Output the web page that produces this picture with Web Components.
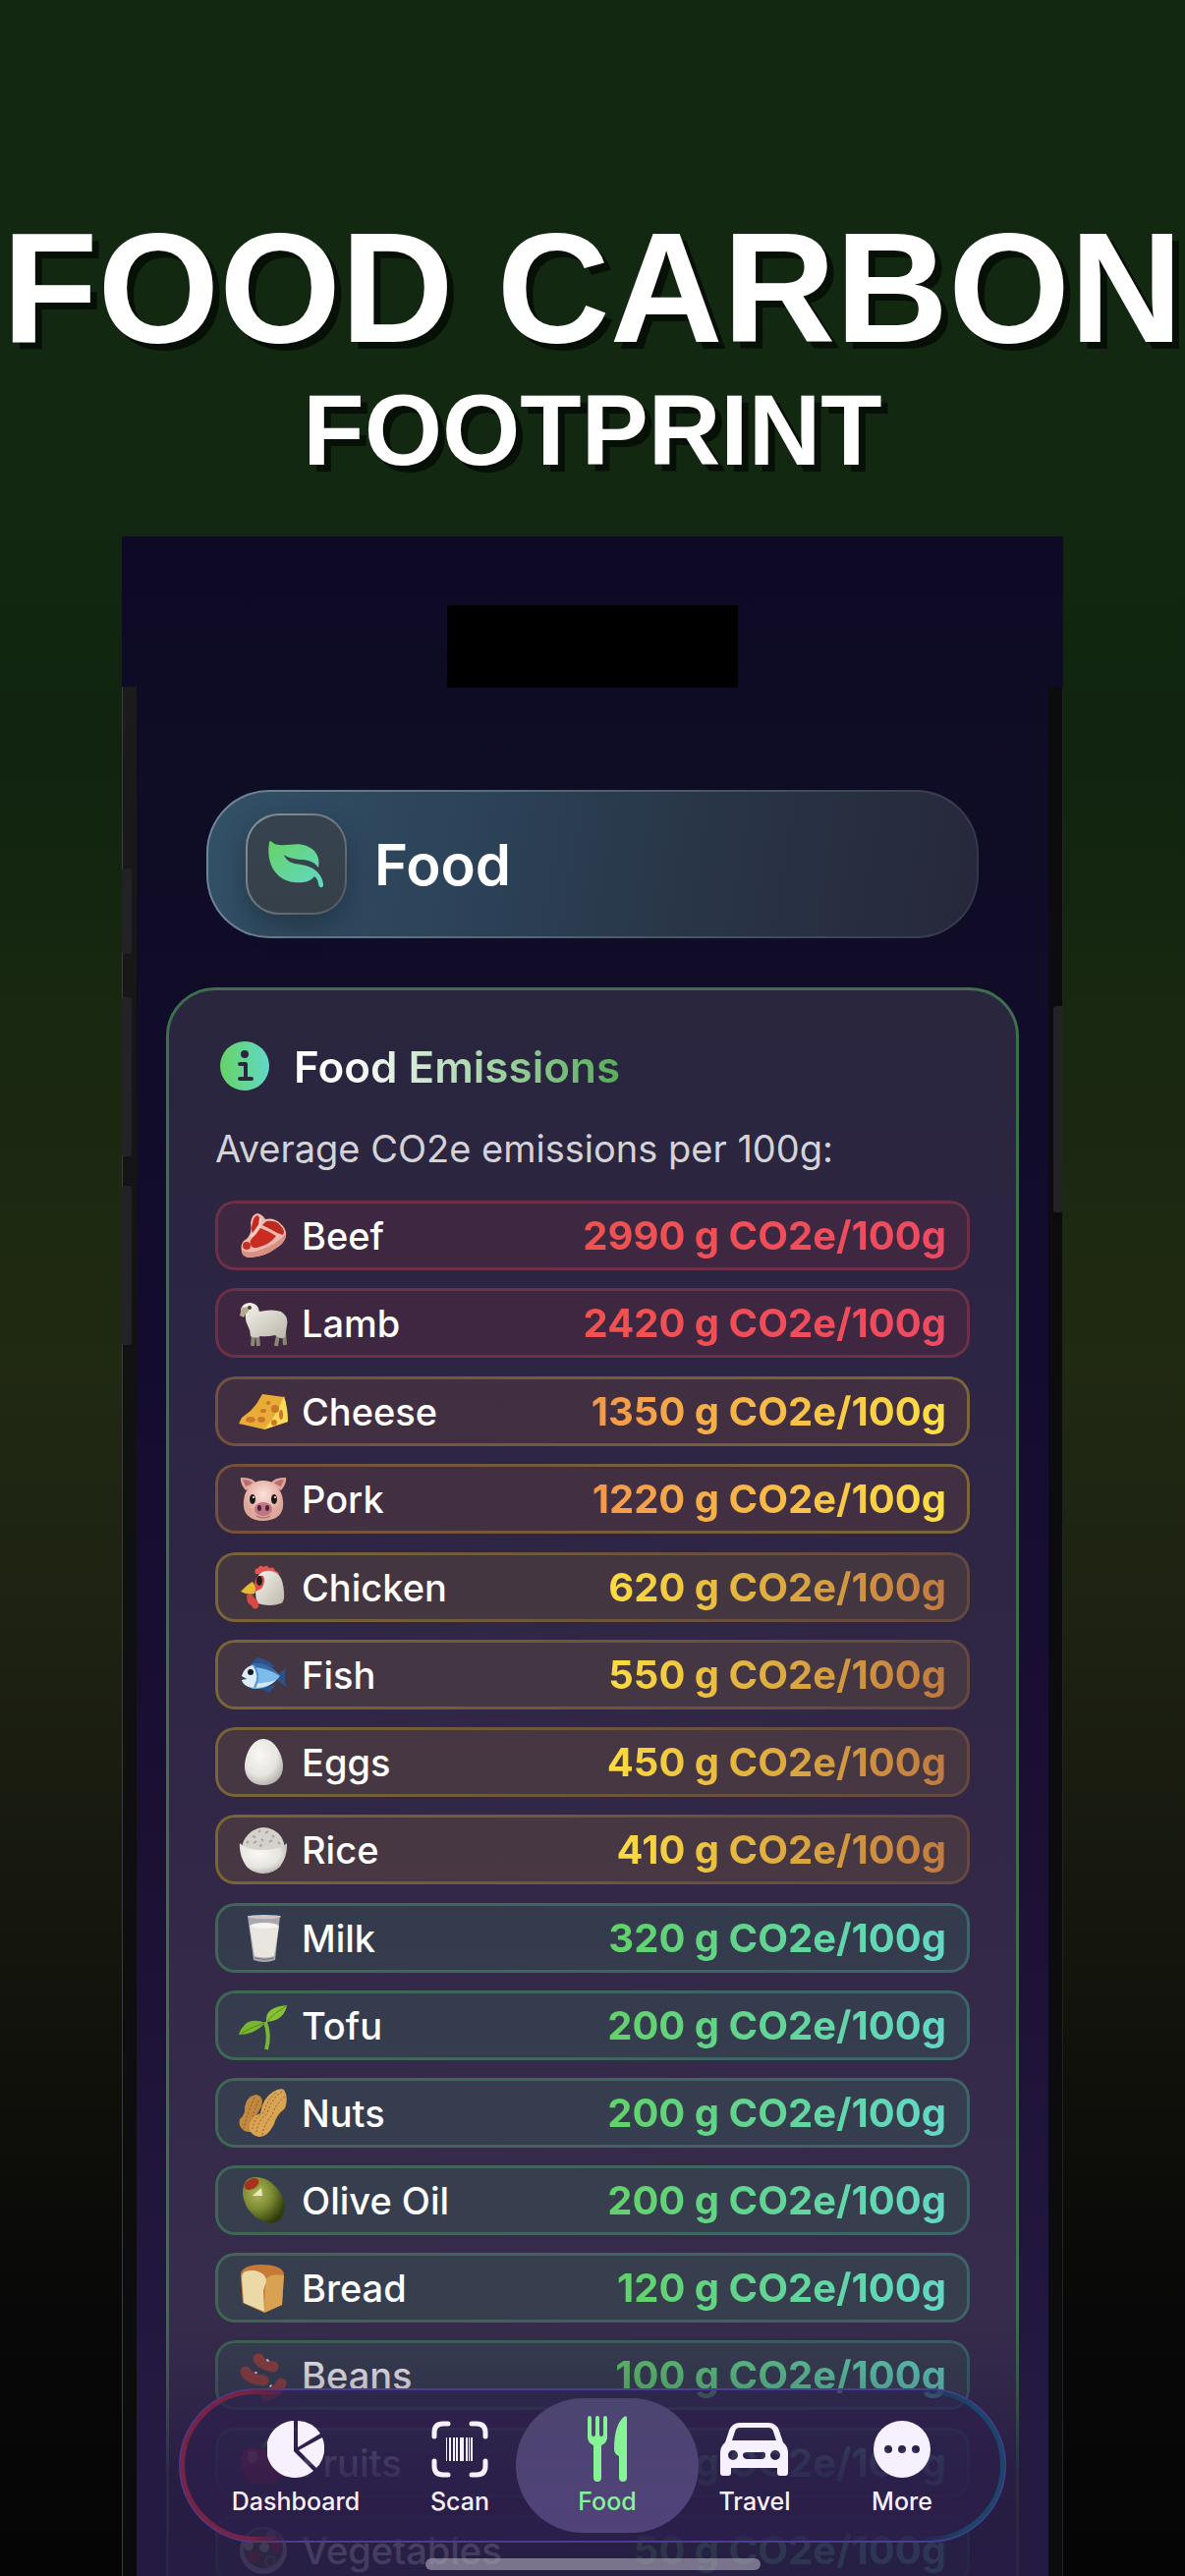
<!DOCTYPE html>
<html lang="en">
<head>
<meta charset="UTF-8">
<meta name="viewport" content="width=device-width, initial-scale=1.0">
<title>Food Carbon Footprint</title>
<style>
    html, body {
        margin: 0;
        height: 100%;
        overflow: hidden;
        background: #050505;
    }

    body {
        font-family: Inter, "Noto Sans", sans-serif;
        color: #fff;
    }
</style>
</head>
<body>
<promo-page>
    <promo-title slot="title">
        FOOD CARBON
        <span slot="sub">FOOTPRINT</span>
    </promo-title>
    <phone-frame>
        <screen-header>Food</screen-header>
        <emissions-panel>
            <span slot="title">Food Emissions</span>
            <span slot="intro">Average CO2e emissions per 100g:</span>
            <emission-tier level="red">
                <emission-row icon="beef">Beef<span slot="value">2990 g CO2e/100g</span></emission-row>
                <emission-row icon="lamb">Lamb<span slot="value">2420 g CO2e/100g</span></emission-row>
            </emission-tier>
            <emission-tier level="orange">
                <emission-row icon="cheese">Cheese<span slot="value">1350 g CO2e/100g</span></emission-row>
                <emission-row icon="pork">Pork<span slot="value">1220 g CO2e/100g</span></emission-row>
            </emission-tier>
            <emission-tier level="yellow">
                <emission-row icon="chicken">Chicken<span slot="value">620 g CO2e/100g</span></emission-row>
                <emission-row icon="fish">Fish<span slot="value">550 g CO2e/100g</span></emission-row>
                <emission-row icon="eggs">Eggs<span slot="value">450 g CO2e/100g</span></emission-row>
                <emission-row icon="rice">Rice<span slot="value">410 g CO2e/100g</span></emission-row>
            </emission-tier>
            <emission-tier level="green">
                <emission-row icon="milk">Milk<span slot="value">320 g CO2e/100g</span></emission-row>
                <emission-row icon="tofu">Tofu<span slot="value">200 g CO2e/100g</span></emission-row>
                <emission-row icon="nuts">Nuts<span slot="value">200 g CO2e/100g</span></emission-row>
                <emission-row icon="olive">Olive Oil<span slot="value">200 g CO2e/100g</span></emission-row>
                <emission-row icon="bread">Bread<span slot="value">120 g CO2e/100g</span></emission-row>
                <emission-row icon="beans">Beans<span slot="value">100 g CO2e/100g</span></emission-row>
                <emission-row icon="fruits">Fruits<span slot="value">80 g CO2e/100g</span></emission-row>
                <emission-row icon="vegetables">Vegetables<span slot="value">50 g CO2e/100g</span></emission-row>
            </emission-tier>
        </emissions-panel>
        <tab-bar slot="tabs">
            <tab-item class="wide" icon="dashboard">Dashboard</tab-item>
            <tab-item icon="scan">Scan</tab-item>
            <tab-item icon="food" active>Food</tab-item>
            <tab-item icon="travel">Travel</tab-item>
            <tab-item icon="more">More</tab-item>
        </tab-bar>
    </phone-frame>
</promo-page>

<script>
// 50x50 food pictures used by the rows
const FOOD_ICONS = {
    beef: `
        <path d="M12 12Q13 3 19 2Q24 3 27 8Q36 6 42 12Q49 18 48 25Q46 34 36 38Q30 45 12 47Q4 47 3 41Q1 31 8 28Q14 22 12 12Z" fill="#f0b9ae"/>
        <path d="M3 39Q10 44 22 39Q38 34 48 23Q49 31 36 39Q28 45 12 47Q3 47 3 39Z" fill="#d98f83"/>
        <path d="M14 12Q15 5 19 4Q23 7 21 12L14 22Q12 18 14 12Z" fill="#c62a1f"/>
        <path d="M28 10Q38 9 42 14Q48 20 45 24Q38 22 32 18L24 14Z" fill="#bd2a20"/>
        <path d="M22 17Q30 20 38 25Q32 33 22 36Q14 39 12 34Q10 29 17 24Z" fill="#c92c20"/>
        <ellipse cx="8" cy="35" rx="4" ry="4" fill="#c23125"/>
        <path d="M22 7L21 15L13 26" fill="none" stroke="#f6d5cc" stroke-width="2"/>`,
    lamb: `<g transform="translate(0 2)">
        <path d="M15 33L14 46M19 35L20 46M40 35L38 46M46 32L47 45" stroke="#8a8774" stroke-width="4"/>
        <path d="M2 10Q3 2 12 2Q20 3 21 11Q34 8 43 11Q51 16 49 25Q48 32 47 37Q42 40 37 35Q29 37 22 36Q17 39 12 36Q12 30 9 25Q6 19 7 13Z" fill="url(#wool)"/>
        <path d="M3 7L10 6Q11 12 7 13L5 17L1 15Z" fill="#b5ab8c"/>
        <circle cx="11" cy="7" r="2" fill="#48443c"/></g>`,
    cheese: `<g transform="translate(0 5)">
        <path d="M24 2L46 5Q49 17 50 30L26 38L0 32L3 26L12 19L18 12Z" fill="#e9ad37"/>
        <path d="M46 4Q50 16 50 30L26 38Q38 25 46 4Z" fill="#fada58"/>
        <g fill="#c9772b"><ellipse cx="12" cy="28" rx="5" ry="3"/><ellipse cx="23" cy="28" rx="4" ry="3"/><ellipse cx="25" cy="19" rx="3" ry="2"/><ellipse cx="37" cy="17" rx="4" ry="4"/><ellipse cx="43" cy="23" rx="2" ry="5"/><ellipse cx="36" cy="31" rx="3" ry="3"/><circle cx="30" cy="11" r="2"/></g></g>`,
    pork: `<g transform="translate(0 1)">
        <path d="M7 15Q1 8 2 2Q13 1 18 8ZM43 15Q49 8 48 2Q37 1 32 8Z" fill="#dfa59c"/>
        <path d="M7 11L4 4Q11 4 14 8ZM43 11L46 4Q39 4 36 8Z" fill="#b76f6c"/>
        <path d="M25 5Q39 5 44 20Q50 45 25 46Q0 45 6 20Q11 5 25 5Z" fill="url(#pig)"/>
        <ellipse cx="14" cy="24" rx="3" ry="5" fill="#1e1a1b"/><ellipse cx="36" cy="24" rx="3" ry="5" fill="#1e1a1b"/>
        <circle cx="15" cy="22" r="1" fill="#fff"/><circle cx="37" cy="22" r="1" fill="#fff"/>
        <ellipse cx="25" cy="34" rx="9" ry="7" fill="#bd7588"/>
        <ellipse cx="21" cy="33" rx="2" ry="3" fill="#4e2030"/><ellipse cx="29" cy="33" rx="2" ry="3" fill="#4e2030"/>
        <path d="M18 41Q25 45 32 41" stroke="#9a635f" stroke-width="1" fill="none"/></g>`,
    chicken: `<g transform="translate(0 1)">
        <path d="M17 10Q15 4 20 4Q21 0 25 3Q29 0 31 4Q36 2 37 7Q43 8 40 14Z" fill="#e2564f"/>
        <path d="M19 13Q25 4 36 8Q45 11 46 29Q47 38 43 40Q32 44 19 40Q15 28 19 13Z" fill="url(#wool)"/>
        <path d="M16 20Q17 10 25 12Q28 18 23 25L17 28Z" fill="#d94c49"/>
        <ellipse cx="21" cy="17" rx="3" ry="5" fill="#211c1c"/>
        <path d="M2 28Q8 21 14 18Q19 24 16 30Q9 32 2 28Z" fill="#e8b830"/>
        <path d="M8 32Q13 28 16 35Q21 37 20 44Q15 48 13 42Q8 41 8 32Z" fill="#d64945"/></g>`,
    fish: `<g transform="translate(0 4)">
        <path d="M12 11Q14 5 20 3Q33 7 37 13ZM40 20L48 13Q46 22 48 33L39 26ZM20 34L31 39L38 31Z" fill="#2c5089"/>
        <path d="M3 22Q9 10 22 10Q33 11 42 22Q32 35 16 35Q5 33 3 26L8 25Z" fill="#7dbcea"/>
        <path d="M12 10Q27 5 42 22Q29 13 12 13Z" fill="#3569a8"/>
        <path d="M3 22Q6 12 15 11Q23 21 16 34Q5 33 3 26L9 25Z" fill="#dcecf8"/>
        <path d="M16 34Q30 34 38 26Q28 30 18 29Z" fill="#d5e8f5"/>
        <path d="M15 11Q23 21 16 34" fill="none" stroke="#5996ce" stroke-width="2"/>
        <circle cx="12" cy="18" r="3" fill="#171923"/></g>`,
    eggs: `<path d="M25 1C37 1 45 18 45 29C45 41 36 48 25 48C14 48 6 41 6 29C6 18 13 1 25 1Z" fill="url(#egg)"/>`,
    rice: `<g transform="translate(0 1)">
        <path d="M3 21Q5 10 15 4Q25 -2 36 4Q45 9 47 21L25 27Z" fill="#d5d1cc"/>
        <path d="M8 17L10 15M14 10L17 11M20 6L22 4M27 7L30 5M34 9L36 11M15 17L18 15M23 13L25 15M31 16L34 14M40 16L42 18M21 20L24 19" stroke="#a8a39d" stroke-width="2"/>
        <path d="M1 17Q8 24 25 24Q42 24 49 17Q50 30 42 41Q35 48 25 48Q15 48 8 41Q0 30 1 17Z" fill="url(#egg)"/></g>`,
    milk: `
        <path d="M9 2L42 2L37 47Q26 51 15 47Z" fill="#a9a8ae"/>
        <path d="M11 12Q26 17 41 12L36 43Q26 46 16 43Z" fill="#e9e6df"/>
        <ellipse cx="26" cy="12" rx="14" ry="3" fill="#f7f5ef"/>
        <ellipse cx="26" cy="3" rx="17" ry="2" fill="#c9c8cd"/>
        <path d="M16 45Q26 48 36 45" fill="none" stroke="#777" stroke-width="1"/>`,
    tofu: `<g transform="translate(0 3)">
        <path d="M28 46Q32 32 27 18" fill="none" stroke="#7cb536" stroke-width="4"/>
        <path d="M0 31Q7 11 27 19Q16 31 0 31Z" fill="#79b52f"/>
        <path d="M28 18Q26 3 49 1Q46 17 28 18Z" fill="#86c136"/>
        <path d="M2 30Q13 23 26 19M29 17Q36 9 48 2" fill="none" stroke="#538a22" stroke-width="1"/></g>`,
    nuts: `
        <path d="M18 6Q26 8 23 18Q20 24 17 28Q20 34 17 40Q13 46 6 43Q-1 39 1 31Q7 26 6 19Q8 7 18 6Z" fill="#c1883f"/>
        <path d="M46 1Q51 9 47 20Q38 27 36 36Q29 50 20 49Q9 46 11 36Q13 28 22 25Q24 10 35 3Q42-1 46 1Z" fill="#d9a453"/>
        <g fill="none" stroke="#8e5a26" stroke-width="1" stroke-dasharray="2 2"><path d="M44 3Q33 10 29 25Q18 34 18 46M47 8Q37 16 34 27Q26 35 24 47M38 4Q28 12 26 24Q15 30 14 41M16 9L10 23L5 40M20 12L14 28"/></g>`,
    olive: `
        <path d="M9 3Q19-2 31 5Q46 16 47 31Q46 47 33 48Q20 47 9 33Q-1 15 9 3Z" fill="url(#olive)"/>
        <ellipse cx="14" cy="8" rx="9" ry="6" transform="rotate(-24 14 8)" fill="#8c9a3c"/>
        <ellipse cx="13" cy="8" rx="8" ry="5" transform="rotate(-30 13 8)" fill="#a8301c"/>
        <path d="M14 20L23 12L24 20Z" fill="#e9edb4"/>`,
    bread: `
        <path d="M2 13Q1 2 22 1Q43 1 46 10L44 42L26 50L4 40Z" fill="#c57a38"/>
        <path d="M27 18Q29 9 46 12L44 42L26 50Z" fill="#d8a250"/>
        <path d="M3 14Q3 6 15 7Q28 9 28 18L25 27L26 49L5 40Z" fill="#ecd9a8"/>`,
    beans: `
        <g stroke-linecap="round" stroke-width="11" fill="none" stroke="#91423c"><path d="M20 8Q23 14 35 16"/><path d="M7 21Q11 29 25 30"/><path d="M28 46Q39 43 43 33"/></g>
        <g stroke-linecap="round" stroke-width="2" stroke="#e4cccb"><path d="M29 9L30 10M17 22L18 22M32 36L33 35"/></g>`,
    fruits: `
        <path d="M25 13Q34 6 43 12Q51 21 46 33Q39 48 33 47L25 45L18 47Q9 47 4 33Q-1 20 7 12Q15 7 25 13Z" fill="#e3293c"/>
        <path d="M25 13Q24 5 19 2" fill="none" stroke="#70492e" stroke-width="2"/>
        <path d="M25 9Q25 0 35-1Q34 8 25 9Z" fill="#76bc33"/>
        <ellipse cx="14" cy="19" rx="5" ry="6" fill="#f28b94"/>`,
    vegetables: `
        <circle cx="25" cy="25" r="24" fill="#c8c7c5"/>
        <circle cx="25" cy="23" r="20" fill="#5b713e"/>
        <g fill="#e3e0d3"><circle cx="10" cy="20" r="5"/><circle cx="26" cy="22" r="5"/><circle cx="33" cy="9" r="5"/></g>
        <g fill="#cb4151"><circle cx="15" cy="31" r="6"/><circle cx="38" cy="21" r="6"/></g>
        <circle cx="32" cy="36" r="5" fill="none" stroke="#a685b5" stroke-width="2"/>`
};

const FOOD_DEFS = `
    <defs>
        <linearGradient id="wool" x2="1" y2="1"><stop stop-color="#f7f5ef"/><stop offset="1" stop-color="#bcb7ab"/></linearGradient>
        <radialGradient id="pig" cy=".35"><stop stop-color="#fce2da"/><stop offset="1" stop-color="#e0a69a"/></radialGradient>
        <radialGradient id="egg" cx=".4" cy=".35" r=".75"><stop stop-color="#f9f8f5"/><stop offset=".6" stop-color="#e6e4df"/><stop offset="1" stop-color="#a9a69d"/></radialGradient>
        <radialGradient id="olive" cx=".35" cy=".35" r=".7"><stop stop-color="#aeb85a"/><stop offset=".5" stop-color="#7d8a32"/><stop offset="1" stop-color="#303c0c"/></radialGradient>
    </defs>`;

const TAB_ICONS = {
    dashboard: `<svg width="58" height="58" viewBox="0 0 58 58">
        <path d="M27 0V31L47 51A29 29 0 1 1 27 0Z"/>
        <path d="M31 0A29 29 0 0 1 54 13L31 27Z"/>
        <path d="M56 17A29 29 0 0 1 50 48L32 30Z"/></svg>`,
    scan: `<svg width="58" height="58" viewBox="0 0 58 58">
        <path d="M3 16V12Q3 3 12 3H17M41 3H46Q55 3 55 12V16M55 41V46Q55 55 46 55H41M17 55H12Q3 55 3 46V41" fill="none" stroke="currentColor" stroke-width="5" stroke-linecap="round"/>
        <path d="M15 17h1v24h-1zM18 17h2v24h-2zM22 17h2v24h-2zM25 17h2v24h-2zM29 17h4v24h-4zM35 17h2v24h-2zM38 17h1v24h-1zM40 17h2v24h-2z"/></svg>`,
    food: `<svg width="41" height="68" viewBox="0 0 41 68">
        <path d="M0 22V3Q0 0 2 0T4 3V19Q4 21 6 21T8 19V2Q8 0 10 0T12 2V19Q12 21 14 21T16 19V3Q16 0 18 0T20 3V22Q20 27 14 30V63Q14 67 10 67T6 63V30Q0 27 0 22Z"/>
        <path d="M40 2V63Q40 67 36 67T32 63V41Q27 39 27 34Q27 9 37 1Q40-1 40 2Z"/></svg>`,
    travel: `<svg width="70" height="54" viewBox="0 0 70 54">
        <path fill-rule="evenodd" d="M20 0H49Q57 0 60 8L64 20Q69 24 69 31V51Q69 54 66 54H61Q58 54 58 51V46H11V51Q11 54 8 54H3Q0 54 0 51V31Q0 24 5 20L9 8Q12 0 20 0ZM20 5Q16 5 15 9L12 18H57L54 9Q53 5 49 5ZM13 28A5 5 0 1 0 13 38A5 5 0 1 0 13 28ZM56 28A5 5 0 1 0 56 38A5 5 0 1 0 56 28ZM27 30Q23 30 23 33T27 37H42Q46 37 46 33T42 30Z"/></svg>`,
    more: `<svg width="58" height="58" viewBox="0 0 58 58">
        <path fill-rule="evenodd" d="M29 0A29 29 0 1 0 29 58A29 29 0 1 0 29 0ZM15 25A4 4 0 1 1 15 33A4 4 0 1 1 15 25ZM29 25A4 4 0 1 1 29 33A4 4 0 1 1 29 25ZM43 25A4 4 0 1 1 43 33A4 4 0 1 1 43 25Z"/></svg>`
};

class PromoPage extends HTMLElement {
    connectedCallback() {
        this.attachShadow({ mode: 'open' });
        this.shadowRoot.innerHTML = `
            <style>
                :host {
                    display: flex;
                    flex-direction: column;
                    box-sizing: border-box;
                    height: 100vh;
                    overflow: hidden;
                    padding-top: 212px;
                    background: linear-gradient(#122810, #122810 20%, #10240f 29%, #192811 40%, #202912 53%, #1d2112 64%, #13140c 77%, #080808 90%, #050505);
                }
            </style>
            <slot name="title"></slot>
            <slot></slot>
        `;
    }
}

class PromoTitle extends HTMLElement {
    connectedCallback() {
        this.attachShadow({ mode: 'open' });
        this.shadowRoot.innerHTML = `
            <style>
                :host { display: block; }

                h1 {
                    display: flex;
                    flex-direction: column;
                    align-items: center;
                    gap: 12px;
                    margin: 0;
                    font: bold 159px/162px "Liberation Sans", Arial, sans-serif;
                    white-space: nowrap;
                    text-shadow: 7px 7px rgba(0, 0, 0, 0.6);
                }

                .sub {
                    font-size: 102px;
                    line-height: 104px;
                }
            </style>
            <h1>
                <span><slot></slot></span>
                <span class="sub"><slot name="sub"></slot></span>
            </h1>
        `;
    }
}

class PhoneFrame extends HTMLElement {
    connectedCallback() {
        this.attachShadow({ mode: 'open' });
        this.shadowRoot.innerHTML = `
            <style>
                :host {
                    display: flex;
                    flex-direction: column;
                    flex: 1;
                    min-height: 0;
                    position: relative;
                    margin: 56px 124px 0;
                    background: linear-gradient(#0e0a26, #0f0c25 12%, #140c2f 40%, #1c1033 65%, #231840 90%, #241a42);
                }

                .screen {
                    flex: 1;
                    min-height: 0;
                    overflow: hidden;
                    padding: 258px 15px 0;
                }

                .rail {
                    position: absolute;
                    top: 153px;
                    bottom: 0;
                    width: 14px;
                    background: linear-gradient(#1b1b1c, #111112 40%, #0b0b0d);
                }

                .left { left: 0; border-left: 1px solid #3c3c3e; }
                .right { right: 0; border-right: 1px solid #222224; background: #0c0c0e; }

                .key {
                    position: absolute;
                    width: 10px;
                    border-radius: 3px;
                    background: #232226;
                }

                .key.action { top: 338px; left: 0; height: 87px; }
                .key.up { top: 469px; left: 0; height: 162px; }
                .key.down { top: 661px; left: 0; height: 162px; }
                .key.power { top: 478px; right: 0; height: 210px; }

                .island {
                    position: absolute;
                    top: 70px;
                    left: 50%;
                    width: 296px;
                    height: 84px;
                    margin-left: -148px;
                    background: #000;
                }

                .fade {
                    position: absolute;
                    left: 15px;
                    right: 15px;
                    bottom: 0;
                    height: 270px;
                    background: linear-gradient(rgba(36, 26, 66, 0), rgba(36, 26, 66, 0.3) 30%, rgba(36, 26, 66, 0.8) 62%, rgba(36, 26, 66, 0.86));
                }

                .tabs {
                    position: absolute;
                    left: 58px;
                    right: 58px;
                    bottom: 34px;
                }

                .home {
                    position: absolute;
                    left: 50%;
                    bottom: 6px;
                    width: 341px;
                    height: 12px;
                    margin-left: -170px;
                    border-radius: 6px;
                    background: rgba(190, 185, 200, 0.55);
                }
            </style>
            <div class="screen"><slot></slot></div>
            <div class="island"></div>
            <div class="rail left"></div>
            <div class="rail right"></div>
            <div class="key action"></div>
            <div class="key up"></div>
            <div class="key down"></div>
            <div class="key power"></div>
            <div class="fade"></div>
            <div class="tabs"><slot name="tabs"></slot></div>
            <div class="home"></div>
        `;
    }
}

class ScreenHeader extends HTMLElement {
    connectedCallback() {
        this.attachShadow({ mode: 'open' });
        this.shadowRoot.innerHTML = `
            <style>
                :host { display: block; margin: 0 71px; }

                header {
                    display: flex;
                    align-items: center;
                    gap: 28px;
                    padding: 22px 38px;
                    border: 2px solid transparent;
                    border-radius: 64px;
                    background:
                        linear-gradient(100deg, #325066, #2c4258 35%, #293648 62%, #26283a) padding-box,
                        linear-gradient(100deg, #6f8796, #4f6070 50%, #33364a) border-box;
                }

                .badge {
                    display: flex;
                    align-items: center;
                    justify-content: center;
                    width: 99px;
                    height: 99px;
                    border: 2px solid transparent;
                    border-radius: 34px;
                    background:
                        linear-gradient(#36434f, #364049) padding-box,
                        linear-gradient(135deg, #8b959b, #4d585f) border-box;
                    box-shadow: 0 12px 24px rgba(20, 30, 40, 0.4);
                }

                h2 {
                    margin: 0;
                    font-size: 58px;
                    line-height: 72px;
                    font-weight: 600;
                }
            </style>
            <header>
                <div class="badge">
                    <svg width="57" height="48" viewBox="0 0 57 48" aria-hidden="true">
                        <defs><linearGradient id="leaf" x2="1" y2="1"><stop stop-color="#66d365"/><stop offset="1" stop-color="#62d8c8"/></linearGradient></defs>
                        <path fill="url(#leaf)" d="M2 0C4 0 5 4 12 4C20 5 30 1 39 5C49 9 53 17 51 27C46 20 39 19 32 19C25 18 20 17 16 14C19 22 26 23 33 24C47 26 55 34 56 44Q56 48 53 47Q51 46 51 43Q50 38 47 36C43 42 34 43 26 42C11 40 -3 27 1 1Z"/>
                    </svg>
                </div>
                <h2><slot></slot></h2>
            </header>
        `;
    }
}

class EmissionsPanel extends HTMLElement {
    connectedCallback() {
        this.attachShadow({ mode: 'open' });
        this.shadowRoot.innerHTML = `
            <style>
                :host { display: block; margin: 50px 30px 0; }

                section {
                    padding: 52px 47px;
                    border: 3px solid #3d6f4c;
                    border-radius: 50px;
                    background: linear-gradient(#2a263e, #2c2543 20%, #322746 50%, #372c4b 78%);
                }

                .head {
                    display: flex;
                    align-items: center;
                    gap: 24px;
                    padding-left: 5px;
                }

                h3 {
                    margin: 0;
                    font-size: 44px;
                    line-height: 50px;
                    font-weight: 600;
                    color: transparent;
                    background: linear-gradient(90deg, #fff 15%, #55ad58);
                    background-clip: text;
                    -webkit-background-clip: text;
                }

                p {
                    margin: 34px 0 29px;
                    font-size: 38px;
                    line-height: 48px;
                    color: #d4d3d8;
                }

                .list {
                    display: flex;
                    flex-direction: column;
                    gap: 19px;
                }
            </style>
            <section>
                <div class="head">
                    <svg width="51" height="51" viewBox="0 0 51 51" aria-hidden="true">
                        <defs><linearGradient id="info" x2="1" y2="0"><stop stop-color="#66d365"/><stop offset="1" stop-color="#62d8c8"/></linearGradient></defs>
                        <circle cx="25" cy="25" r="25" fill="url(#info)"/>
                        <circle cx="25" cy="13" r="4" fill="#2a263e"/>
                        <path d="M20 23H26V37M20 38H32" fill="none" stroke="#2a263e" stroke-width="4" stroke-linecap="round" stroke-linejoin="round"/>
                    </svg>
                    <h3><slot name="title"></slot></h3>
                </div>
                <p><slot name="intro"></slot></p>
                <div class="list" role="list"><slot></slot></div>
            </section>
        `;
    }
}

// Passes the colours of its severity level down to the rows
class EmissionTier extends HTMLElement {
    connectedCallback() {
        this.attachShadow({ mode: 'open' });
        this.shadowRoot.innerHTML = `
            <style>
                :host {
                    display: flex;
                    flex-direction: column;
                    gap: 18px;
                }

                :host([level="red"]) { --from: #f0524e; --to: #ef4a62; --fill: rgba(240, 60, 60, 0.1); --edge-from: #6d3044; --edge-to: #6d3048; }
                :host([level="orange"]) { --from: #f3974a; --to: #fcdf45; --fill: rgba(250, 140, 50, 0.1); --edge-from: #74503e; --edge-to: #7a6637; }
                :host([level="yellow"]) { --from: #fcdc42; --to: #c07a40; --fill: rgba(240, 190, 50, 0.11); --edge-from: #796436; --edge-to: #644840; }
                :host([level="green"]) { --from: #62d268; --to: #62d8c6; --fill: rgba(60, 220, 120, 0.11); --edge-from: #3f6853; --edge-to: #3d646b; }
            </style>
            <slot></slot>
        `;
    }
}

class EmissionRow extends HTMLElement {
    connectedCallback() {
        this.setAttribute('role', 'listitem');
        this.attachShadow({ mode: 'open' });
        this.shadowRoot.innerHTML = `
            <style>
                :host {
                    display: flex;
                    align-items: center;
                    gap: 14px;
                    box-sizing: border-box;
                    height: 71px;
                    padding: 0 24px;
                    position: relative;
                    border-radius: 20px;
                    background: var(--fill);
                    font-size: 38px;
                    line-height: 48px;
                    font-weight: 500;
                    white-space: nowrap;
                }

                /* gradient outline: only the ring is painted */
                :host::before {
                    content: "";
                    position: absolute;
                    inset: 0;
                    padding: 3px;
                    border-radius: inherit;
                    background: linear-gradient(90deg, var(--edge-from), var(--edge-to));
                    mask: linear-gradient(#000 0 0) content-box exclude, linear-gradient(#000 0 0);
                }

                svg {
                    flex: none;
                    overflow: visible;
                }

                .name { flex: 1; }

                .value {
                    font-size: 40px;
                    font-weight: 700;
                    color: transparent;
                    background: linear-gradient(90deg, var(--from), var(--to));
                    background-clip: text;
                    -webkit-background-clip: text;
                }
            </style>
            <svg width="50" height="50" viewBox="0 0 50 50" aria-hidden="true">${FOOD_DEFS}${FOOD_ICONS[this.getAttribute('icon')]}</svg>
            <span class="name"><slot></slot></span>
            <span class="value"><slot name="value"></slot></span>
        `;
    }
}

class TabBar extends HTMLElement {
    connectedCallback() {
        this.attachShadow({ mode: 'open' });
        this.shadowRoot.innerHTML = `
            <style>
                :host { display: block; }

                nav {
                    display: flex;
                    position: relative;
                    padding: 8px 29px 8px 25px;
                    border: 2px solid #4c3a94;
                    border-radius: 80px;
                    background: rgba(45, 31, 79, 0.6);
                }

                nav::before, nav::after {
                    content: "";
                    position: absolute;
                    inset: -1px;
                    border-radius: inherit;
                    pointer-events: none;
                }

                nav::before {
                    border: 5px solid #742545;
                    box-shadow: 0 0 0 1px #b03a92;
                    mask: linear-gradient(90deg, #000 70px, transparent 110px);
                }

                nav::after {
                    border: 5px solid #1c4569;
                    box-shadow: 0 0 0 1px #4668b8;
                    mask: linear-gradient(270deg, #000 40px, transparent 90px);
                }

                ::slotted(tab-item) { flex: 150; }
                ::slotted(tab-item.wide) { flex: 184; }
            </style>
            <nav><slot></slot></nav>
        `;
    }
}

class TabItem extends HTMLElement {
    connectedCallback() {
        this.attachShadow({ mode: 'open' });
        this.shadowRoot.innerHTML = `
            <style>
                :host { display: block; min-width: 0; }

                button {
                    display: flex;
                    flex-direction: column;
                    align-items: center;
                    position: relative;
                    width: 100%;
                    padding: 14px 0 16px;
                    border: 0;
                    background: none;
                    color: #f6f0ff;
                    font: 500 25px/32px Inter, "Noto Sans", sans-serif;
                    cursor: pointer;
                }

                .glyph {
                    display: flex;
                    align-items: center;
                    height: 75px;
                }

                svg, .label { position: relative; }
                svg { fill: currentColor; }

                :host([active]) button { color: #86f397; }

                /* the highlight is wider than its tab */
                :host([active]) button::before {
                    content: "";
                    position: absolute;
                    inset: 0 -18px;
                    border-radius: 69px;
                    background: linear-gradient(#4c4570, #51427a);
                }
            </style>
            <button type="button">
                <span class="glyph">${TAB_ICONS[this.getAttribute('icon')]}</span>
                <span class="label"><slot></slot></span>
            </button>
        `;
    }
}

customElements.define('promo-page', PromoPage);
customElements.define('promo-title', PromoTitle);
customElements.define('phone-frame', PhoneFrame);
customElements.define('screen-header', ScreenHeader);
customElements.define('emissions-panel', EmissionsPanel);
customElements.define('emission-tier', EmissionTier);
customElements.define('emission-row', EmissionRow);
customElements.define('tab-bar', TabBar);
customElements.define('tab-item', TabItem);
</script>
</body>
</html>
